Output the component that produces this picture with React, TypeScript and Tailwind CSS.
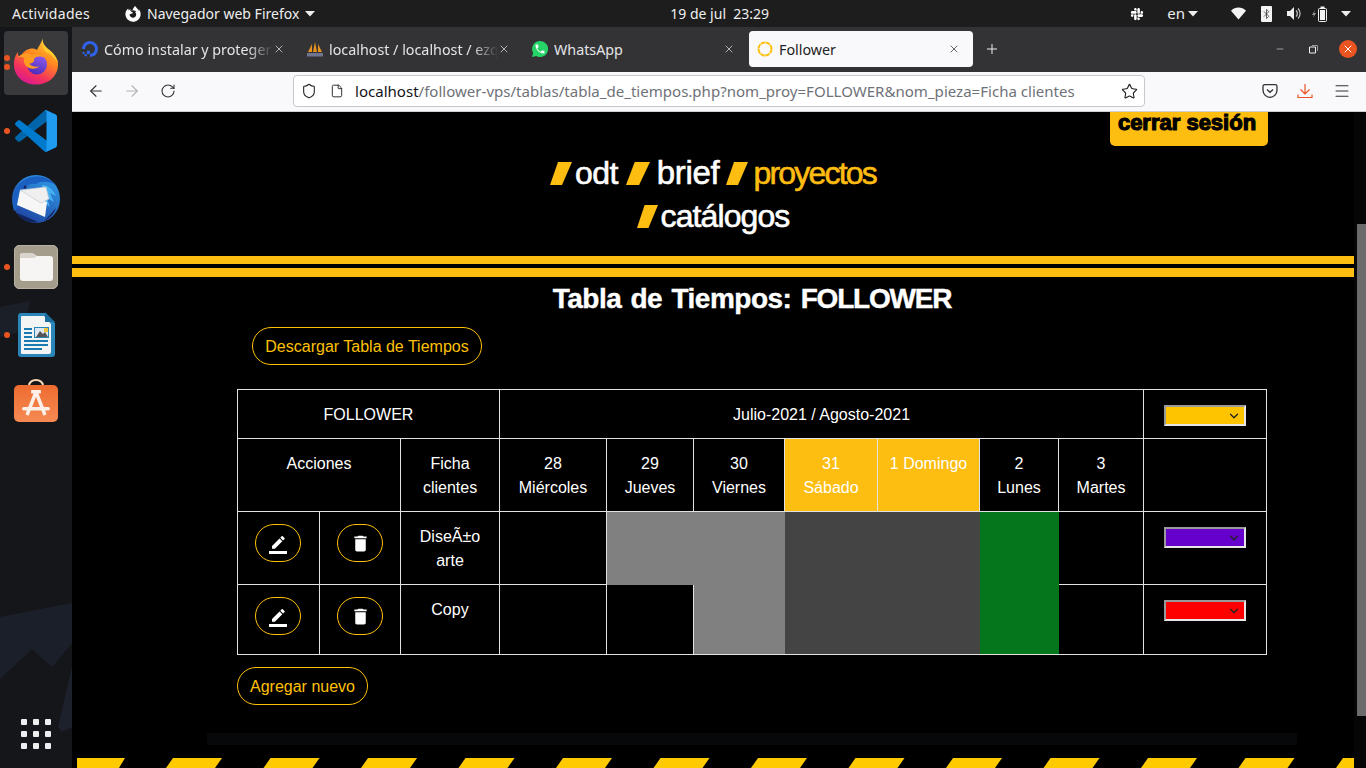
import * as React from "react";
import { ArrowLeft, ArrowRight, RotateCw, Shield, File, Star, Menu, X, Plus, Minus, Bluetooth, ChevronDown } from "lucide-react";
import { FaFirefoxBrowser, FaSlack } from "react-icons/fa";
import { SiDigitalocean } from "react-icons/si";
import { MdDelete } from "react-icons/md";

const UI_FONT = "font-['Noto_Sans',sans-serif]";

const Caret = ({ className = "" }: { className?: string }) => (
  <svg width="10" height="6" viewBox="0 0 10 6" className={className}>
    <path d="M0 0h10L5 5.5z" fill="currentColor" />
  </svg>
);

const FirefoxIcon = () => (
  <svg width="46" height="47" viewBox="0 0 48 48" className="mb-[3px]">
    <defs>
      <linearGradient id="ffBase" x1="0.8" y1="0" x2="0.3" y2="1">
        <stop offset="0" stopColor="#ffd23c" />
        <stop offset="0.4" stopColor="#ff8a1e" />
        <stop offset="0.75" stopColor="#f5345c" />
        <stop offset="1" stopColor="#d9178f" />
      </linearGradient>
      <linearGradient id="ffGlobe" x1="0.7" y1="0" x2="0.3" y2="1">
        <stop offset="0" stopColor="#8f5cf0" />
        <stop offset="1" stopColor="#4a2ab8" />
      </linearGradient>
    </defs>
    <path d="M31 0c-.5 6 3 9 7 12 6 5 9 10 9 15 0 12-10 21-23 21S1 39 1 27c0-5 1-9 4-13 0 3 1 5 3 6 1-5 5-8 9-9 3-1 6-.5 8 1 2-4 5-8 6-12z" fill="url(#ffBase)" />
    <path d="M31 0c-.5 6 3 9 7 12 5 4 8 9 9 14-3-6-8-10-13-12-3-4-4-9-3-14z" fill="#ffcb2d" />
    <circle cx="25" cy="27" r="10.500" fill="url(#ffGlobe)" />
    <path d="M5 20C9 15 15 14 20 17c4-2 10-1 13 3-5-2-9-1-11 1 1 3-2 5-5 5 2 3 7 4 11 3-5 4-12 3-15-1-2-3-2-6-1-8-3-1-5-1-7 0z" fill="#ff9b20" />
  </svg>
);

const VsCodeIcon = () => (
  <svg width="42" height="42" viewBox="0 0 100 100">
    <path fill="#0065A9" d="M96.5 10.8 75.9.9c-2.4-1.1-5.2-.6-7.1 1.2L1.4 63.6c-1.8 1.6-1.8 4.5 0 6.2l5.5 5c1.5 1.3 3.7 1.4 5.3.2L93.4 13.4c2.7-2.1 6.6-.1 6.6 3.3v-.2c0-2.4-1.4-4.6-3.5-5.7z" />
    <path fill="#007ACC" d="M96.5 89.2 75.9 99.1c-2.4 1.1-5.2.6-7.1-1.2L1.4 36.4c-1.8-1.6-1.8-4.5 0-6.2l5.5-5c1.5-1.3 3.7-1.4 5.3-.2l81.2 61.6c2.7 2.1 6.6.1 6.6-3.3v.2c0 2.4-1.4 4.6-3.5 5.7z" />
    <path fill="#1F9CF0" d="M75.9 99.1c-2.4 1.2-5.2.7-7.1-1.2C71.1 100.2 75 98.6 75 95.3V4.7c0-3.3-3.9-4.9-6.2-2.6 1.9-1.9 4.7-2.4 7.1-1.2l20.6 9.9c2.1 1 3.5 3.2 3.5 5.6v67.2c0 2.4-1.4 4.6-3.5 5.6L75.9 99.1z" />
  </svg>
);

const ThunderbirdIcon = () => (
  <svg width="48" height="48" viewBox="0 0 48 48">
    <defs>
      <linearGradient id="tbBody" x1="0.8" y1="0" x2="0.2" y2="1">
        <stop offset="0" stopColor="#2f9be8" />
        <stop offset="1" stopColor="#1e3f9e" />
      </linearGradient>
    </defs>
    <circle cx="24" cy="24" r="24" fill="url(#tbBody)" />
    <path d="M2 36C-2 24 2 10 14 4c10-5 22-3 30 6-8-4-15-4-20-1-5-1-9 1-11 4l-2 6c-2 6-2 12-9 17z" fill="#1b5fc0" />
    <path d="M30 10c6 0 11 4 14 11l-6-3 4 9-7-4 3 9-8-6z" fill="#47b0f0" />
    <path d="M8 15l27 12-2 15L5 30z" fill="#f6f6f6" />
    <path d="M8 15l26-3 3 12-8 4z" fill="#efefef" stroke="#b9c2cc" strokeWidth="0.600" />
    <path d="M14 46c-4-2-7-5-9-8l12 5 9 4c-4 1-8 0-12-1zM32 46c5-2 10-7 12-13l-7 8z" fill="#12245e" />
    <circle cx="13" cy="12" r="1.500" fill="#12245e" />
  </svg>
);

const FilesIcon = () => (
  <div className="flex h-[44px] w-[44px] items-center justify-center rounded-[5px] border border-[#b9b2a4] bg-[#a59d8c]">
    <svg width="33" height="28" viewBox="0 0 33 28">
      <path d="M0 3a3 3 0 0 1 3-3h9l5 3h13a3 3 0 0 1 3 3v19a3 3 0 0 1-3 3H3a3 3 0 0 1-3-3z" fill="#f6f5f3" />
      <path d="M0 3a3 3 0 0 1 3-3h9l5 3-3 2H0z" fill="#d8d4cb" />
    </svg>
  </div>
);

const WriterIcon = () => (
  <svg width="37" height="46" viewBox="0 0 37 46">
    <path d="M3 1h24l10 10v31a3 3 0 0 1-3 3H3a3 3 0 0 1-3-3V4a3 3 0 0 1 3-3z" fill="#2a86b8" />
    <path d="M4 4h22l7 8v28a2 2 0 0 1-2 2H4a1 1 0 0 1-1-1V5a1 1 0 0 1 1-1z" fill="#f3f5f5" />
    <path d="M27 0l10 10H27z" fill="#1a6d9c" />
    <path d="M6 16h8v2H6zM6 20h8v2H6zM6 24h8v2H6zM6 28h24v2H6zM6 32h24v2H6zM6 36h18v2H6z" fill="#1a7bb0" />
    <rect x="16" y="15" width="15" height="11" fill="#2a86b8" />
    <rect x="17" y="16" width="13" height="9" fill="#dfe8ee" />
    <path d="M18 25l4-6 3 3 2-2 3 5z" fill="#555" />
    <rect x="26" y="16" width="4" height="4" fill="#f0c33c" />
  </svg>
);

const StoreIcon = () => (
  <svg width="44" height="43" viewBox="0 0 44 43" className="mb-[5px]">
    <defs>
      <linearGradient id="storeBag" x1="0" y1="0" x2="0" y2="1">
        <stop offset="0" stopColor="#ee6c2f" />
        <stop offset="1" stopColor="#f58a54" />
      </linearGradient>
    </defs>
    <path d="M15 8V6.500a7 5.500 0 0 1 14 0V8" fill="none" stroke="#f8d8b8" strokeWidth="2" />
    <rect x="0" y="6" width="44" height="37" rx="5" fill="url(#storeBag)" />
    <path d="M22 13L13 36M22 13L31 36" fill="none" stroke="#fbefe8" strokeWidth="3.500" />
    <rect x="17" y="11" width="10" height="3.500" rx="1" fill="#fbefe8" />
    <rect x="8" y="28" width="28" height="3.500" rx="1.700" fill="#fbefe8" />
  </svg>
);

const dockApps = [
  { key: "firefox", icon: <FirefoxIcon />, active: true },
  { key: "vscode", icon: <VsCodeIcon /> },
  { key: "thunderbird", icon: <ThunderbirdIcon /> },
  { key: "files", icon: <FilesIcon /> },
  { key: "writer", icon: <WriterIcon /> },
  { key: "store", icon: <StoreIcon /> },
];

const Dock = () => (
  <aside className="relative flex w-[72px] shrink-0 flex-col items-center gap-1 overflow-hidden bg-[#15161a] pt-1">
    <svg className="absolute inset-0 h-full w-full" viewBox="0 0 72 741" preserveAspectRatio="none">
      <path d="M0 590l72-14v40l-20 24-20-18-32 30z" fill="#1f2733" opacity="0.6" />
      <path d="M58 700l14-60v60l-10 5z" fill="#1f2733" opacity="0.7" />
      <path d="M0 280l30-6-6 30-24 6z" fill="#1a1f28" />
    </svg>
    {dockApps.map((app) => (
      <div
        key={app.key}
        className={`relative flex h-16 w-16 items-center justify-center rounded-[4px] ${app.active ? "bg-[#3a3a3c]" : ""}`}
      >
        {app.icon}
      </div>
    ))}
    <span className="absolute left-[4px] top-[28px] h-[6px] w-[6px] rounded-full bg-[#e95420]" />
    <span className="absolute left-[4px] top-[37px] h-[6px] w-[6px] rounded-full bg-[#e95420]" />
    <span className="absolute left-[4px] top-[101px] h-[6px] w-[6px] rounded-full bg-[#e95420]" />
    <span className="absolute left-[4px] top-[237px] h-[6px] w-[6px] rounded-full bg-[#e95420]" />
    <span className="absolute left-[4px] top-[305px] h-[6px] w-[6px] rounded-full bg-[#e95420]" />
    <div className="relative mb-[19px] mt-auto grid grid-cols-3 gap-[6px]">
      {Array.from({ length: 9 }).map((_, i) => (
        <span key={i} className="h-[6px] w-[6px] rounded-[1px] bg-[#eeeeee]" />
      ))}
    </div>
  </aside>
);

const TopBar = () => (
  <header className={`flex h-[27px] items-center bg-[#1d1d1d] text-[14px] text-[#eeeeee] ${UI_FONT}`}>
    <span className="ml-3 w-[113px] tracking-[0.300px]">Actividades</span>
    <FaFirefoxBrowser size={16} className="text-white" />
    <span className="ml-[6px]">Navegador web Firefox</span>
    <Caret className="ml-[6px]" />
    <span className="ml-[355px]">19 de jul&nbsp;&nbsp;23:29</span>
    <div className="ml-auto flex items-center pr-[15px]">
      <FaSlack size={14} className="text-white" />
      <span className="ml-[23px] text-[15px]">en</span>
      <Caret className="ml-[3px]" />
      <svg width="15" height="13" viewBox="0 0 16 13" className="ml-[33px]">
        <path d="M0 3.500C4.500-1 11.500-1 16 3.500L8 13z" fill="#f4f4f4" />
      </svg>
      <span className="ml-[15px] flex h-[16px] w-[11px] items-center justify-center rounded-[1px] bg-[#f4f4f4]">
        <Bluetooth size={12} strokeWidth={1.5} className="text-[#222]" />
      </span>
      <svg width="15" height="13" viewBox="0 0 15 13" className="ml-[15px]">
        <path d="M0 4h3l4-4v13L3 9H0z" fill="#f0f0f0" />
        <path d="M9 3.500a4 4 0 0 1 0 6M11 1.500a7 7 0 0 1 0 10" fill="none" stroke="#c8c8c8" strokeWidth="1.200" />
      </svg>
      <svg width="16" height="16" viewBox="0 0 16 16" className="ml-[10px]">
        <path d="M3 4L0 9h2l-1 3 3-5H2z" fill="#9a9a9a" />
        <rect x="6.500" y="2.500" width="8" height="13" rx="1" fill="none" stroke="#f4f4f4" />
        <rect x="8.500" y="0.500" width="4" height="2" fill="#f4f4f4" />
        <rect x="8" y="4" width="5" height="10" fill="#f4f4f4" />
      </svg>
      <Caret className="ml-[13px]" />
    </div>
  </header>
);

const tabs = [
  { title: "Cómo instalar y proteger", icon: <SiDigitalocean size={16} className="text-[#2f62e8]" />, fade: true },
  {
    title: "localhost / localhost / ezq",
    fade: true,
    icon: (
      <svg width="16" height="15" viewBox="0 0 16 15">
        <path d="M1 10L5 2v8zM6 10L8 0l2 10zM11 10V2l4 8z" fill="#e8921e" />
        <path d="M0 11h16v3.500H0z" fill="#6f7590" />
      </svg>
    ),
  },
  {
    title: "WhatsApp",
    icon: (
      <svg width="16" height="16" viewBox="0 0 16 16">
        <path d="M8 0a8 8 0 1 1-3.800 15L0 16l1.100-4.100A8 8 0 0 1 8 0z" fill="#25d366" />
        <path
          transform="translate(2 2) scale(0.500)"
          d="M6.620 10.790c1.440 2.830 3.760 5.140 6.590 6.590l2.200-2.200c.27-.27.67-.36 1.020-.24 1.120.37 2.330.57 3.570.57.55 0 1 .45 1 1V20c0 .55-.45 1-1 1-9.390 0-17-7.610-17-17 0-.55.45-1 1-1h3.500c.55 0 1 .45 1 1 0 1.250.2 2.450.57 3.570.11.35.03.74-.25 1.020l-2.200 2.200z"
          fill="white"
        />
      </svg>
    ),
  },
  {
    title: "Follower",
    active: true,
    icon: (
      <svg width="16" height="16" viewBox="0 0 16 16">
        <circle cx="8" cy="8" r="6.500" fill="none" stroke="#fdc010" strokeWidth="2" strokeDasharray="4.500 0.600" />
      </svg>
    ),
  },
];

const TabBar = () => (
  <div className={`flex h-[45px] items-center gap-[1px] bg-[#333336] pb-[1px] pl-[2px] text-[14.300px] ${UI_FONT}`}>
    {tabs.map((tab) => (
      <div
        key={tab.title}
        className={`flex h-[36px] w-[224px] shrink-0 items-center rounded-[4px] pl-2 pr-[13px] ${
          tab.active ? "bg-[#f9f9fb] text-[#222]" : "text-[#e4e4e6]"
        }`}
      >
        <span className="flex w-4 shrink-0 justify-center">{tab.icon}</span>
        <span
          className={`ml-[6px] min-w-0 flex-1 overflow-hidden whitespace-nowrap pt-[2px] ${
            tab.fade ? "[mask-image:linear-gradient(to_right,black_85%,transparent_100%)]" : ""
          }`}
        >
          {tab.title}
        </span>
        <X size={12} strokeWidth={1.5} className={`shrink-0 ${tab.active ? "text-[#333]" : "text-[#ddd]"}`} />
      </div>
    ))}
    <Plus size={16} strokeWidth={1.5} className="ml-[10px] text-[#eee]" />
    <div className="ml-auto flex items-center pr-[9px]">
      <Minus size={10} strokeWidth={1.5} className="text-[#ddd]" />
      <svg width="10" height="10" viewBox="0 0 10 10" className="ml-[24px]">
        <path d="M.5 3h6v6h-6z" fill="none" stroke="#eee" />
        <path d="M3 1.500h5.500V7" fill="none" stroke="#999" />
      </svg>
      <span className="ml-[20px] flex h-[18px] w-[18px] items-center justify-center rounded-full bg-[#e95420]">
        <X size={12} strokeWidth={2} className="text-white" />
      </span>
    </div>
  </div>
);

const UrlBar = () => (
  <div className="flex h-[32px] w-[852px] items-center rounded-[4px] border border-[#c8c8ca] bg-white">
    <Shield size={16} strokeWidth={1.6} className="ml-[7px] text-[#222]" />
    <File size={14} strokeWidth={1.6} className="ml-[13px] text-[#222]" />
    <span className={`ml-[11px] whitespace-nowrap text-[15.060px] ${UI_FONT}`}>
      <span className="text-[#15141a]">localhost</span>
      <span className="text-[#6f7278]">/follower-vps/tablas/tabla_de_tiempos.php?nom_proy=FOLLOWER&amp;nom_pieza=Ficha clientes</span>
    </span>
    <Star size={17} strokeWidth={1.6} className="ml-auto mr-[6px] text-[#222]" />
  </div>
);

const NavBar = () => (
  <div className="flex h-[40px] items-center border-b border-[#cfcfd2] bg-[#f9f9fb] pb-[1px] text-[#333]">
    <ArrowLeft size={18} strokeWidth={1.5} className="ml-[15px]" />
    <ArrowRight size={18} strokeWidth={1.5} className="ml-[18px] text-[#b4b4b6]" />
    <RotateCw size={16} strokeWidth={1.6} className="ml-[19px]" />
    <div className="ml-[117px]">
      <UrlBar />
    </div>
    <svg width="16" height="14" viewBox="0 0 16 14" className="ml-[117px]" fill="none" stroke="#333" strokeWidth="1.300">
      <path d="M1 2.500C1 1.500 1.700.7 2.700.7h10.600c1 0 1.700.8 1.700 1.800V6c0 4-3 7.300-7 7.300S1 10 1 6z" />
      <path d="M5 5.500l3 2.800 3-2.800" />
    </svg>
    <svg width="16" height="15" viewBox="0 0 16 15" className="ml-[19px]" fill="none" stroke="#e95420" strokeWidth="1.200">
      <path d="M8 0v10M3.500 5.500L8 10l4.500-4.500M1 10.500v3h14v-3" />
    </svg>
    <Menu size={18} strokeWidth={1.4} className="ml-[20px]" />
  </div>
);

const Slash = ({ width = 22 }: { width?: number }) => (
  <svg width={width} height="23" viewBox="0 0 22 23" preserveAspectRatio="none" className="shrink-0">
    <path d="M8 0h14L12 23H0z" fill="#febd11" />
  </svg>
);

const NavLink = ({ children, className }: { children: React.ReactNode; className: string }) => (
  <span className={`font-['Liberation_Sans',sans-serif] leading-[40px] [-webkit-text-stroke:0.600px_currentColor] ${className}`}>
    {children}
  </span>
);

const PILL =
  "flex h-[38px] items-center justify-center rounded-[19px] border border-[#ffc107] text-[16px] text-[#ffc107]";

const EditIcon = () => (
  <svg width="18" height="18" viewBox="0 0 24 24" fill="white">
    <path d="M17.750 7 14 3.250l-10 10V17h3.750l10-10zm2.960-2.960c.39-.39.39-1.020 0-1.410L18.370.29c-.39-.39-1.020-.39-1.410 0L15 2.250 18.750 6l1.960-1.960z" />
    <path d="M0 20h24v4H0z" />
  </svg>
);

const ColorSelect = ({ color }: { color: string }) => (
  <div className="relative h-[21px] w-[82px]">
    <select
      className="block h-[21px] w-[82px] appearance-none border-2 border-t-[#9a9a9a] border-l-[#9a9a9a] border-r-[#e6e6e6] border-b-[#e6e6e6] text-black"
      style={{ backgroundColor: color }}
    >
      <option value=""></option>
    </select>
    <ChevronDown size={14} strokeWidth={2.2} className="pointer-events-none absolute right-[5px] top-[4px] text-[#222]" />
  </div>
);

const CELL = "border-r border-b border-[#e2e2e2] text-center align-top pt-[13px]";
const MID_CELL = "border-r border-b border-[#e2e2e2] text-center align-middle pt-[2px]";
const SELECT_CELL = "border-r border-b border-[#e2e2e2] align-top pt-[15px] pl-5";
const PIPE_CELL = "border-r border-b border-[#e2e2e2] align-top pt-3";
const days = [
  { n: "28", d: "Miércoles" },
  { n: "29", d: "Jueves" },
  { n: "30", d: "Viernes" },
  { n: "31", d: "Sábado", hl: true },
  { n: "1 Domingo", d: "", hl: true },
  { n: "2", d: "Lunes" },
  { n: "3", d: "Martes" },
];

const ActionCells = () => (
  <>
    <td className={PIPE_CELL}>
      <div className="flex justify-center pr-[1px]">
        <button className={`${PILL} w-[46px] pt-1`}>
          <EditIcon />
        </button>
      </div>
    </td>
    <td className={PIPE_CELL}>
      <div className="flex justify-center">
        <button className={`${PILL} w-[46px]`}>
          <MdDelete size={21} className="text-white" />
        </button>
      </div>
    </td>
  </>
);

const TimeTable = () => (
  <table className="table-fixed w-[1030px] border-separate border-spacing-0 border-l border-t border-[#e2e2e2] text-[16px] leading-[24px] text-white">
    <colgroup>
      {[82, 81, 99, 107, 87, 91, 93, 102, 79, 85, 123].map((w, i) => (
        <col key={i} style={{ width: w }} />
      ))}
    </colgroup>
    <tbody>
      <tr className="h-[49px]">
        <td colSpan={3} className={MID_CELL}>FOLLOWER</td>
        <td colSpan={7} className={MID_CELL}>Julio-2021 / Agosto-2021</td>
        <td className={SELECT_CELL}>
          <ColorSelect color="#ffc400" />
        </td>
      </tr>
      <tr className="h-[73px]">
        <td colSpan={2} className={CELL}>Acciones</td>
        <td className={CELL}>Ficha<br />clientes</td>
        {days.map((day) => (
          <td key={day.n} className={`${CELL} ${day.hl ? "bg-[#febd11]" : ""}`}>
            {day.n}
            {day.d && <br />}
            {day.d}
          </td>
        ))}
        <td className={CELL}></td>
      </tr>
      <tr className="h-[73px]">
        <ActionCells />
        <td className={CELL}>DiseÃ±o<br />arte</td>
        <td className={CELL}></td>
        <td className="bg-[#808080]"></td>
        <td className="bg-[#808080]"></td>
        <td className="bg-[#444444]"></td>
        <td className="bg-[#444444]"></td>
        <td className="bg-[#06761c]"></td>
        <td className={CELL}></td>
        <td className={SELECT_CELL}>
          <ColorSelect color="#6600cc" />
        </td>
      </tr>
      <tr className="h-[70px]">
        <ActionCells />
        <td className={CELL}>Copy</td>
        <td className={CELL}></td>
        <td className={CELL}></td>
        <td className="border-b border-[#e2e2e2] bg-[#808080]"></td>
        <td className="border-b border-[#e2e2e2] bg-[#444444]"></td>
        <td className="border-b border-[#e2e2e2] bg-[#444444]"></td>
        <td className="border-b border-[#e2e2e2] bg-[#06761c]"></td>
        <td className={CELL}></td>
        <td className={SELECT_CELL}>
          <ColorSelect color="#ff0000" />
        </td>
      </tr>
    </tbody>
  </table>
);

const HazardStripes = () => (
  <svg width="1277" height="10" viewBox="0 0 1277 10" className="ml-[5px] mt-[13px] block shrink-0">
    <path d="M0 0h48l-6 10H0z" fill="#ffcb00" />
    {Array.from({ length: 13 }).map((_, i) => {
      const x = 96 + i * 97.500;
      return <path key={i} d={`M${x} 0h49l-7 10h-49z`} fill="#ffcb00" />;
    })}
  </svg>
);

const Page = () => (
  <div className="flex min-w-0 flex-1 flex-col overflow-hidden bg-black font-['Liberation_Sans',sans-serif]">
    <div className="flex justify-end pr-[86px]">
      <a className="flex h-[34px] w-[158px] justify-center rounded-b-[5px] bg-[#febd11] pr-[4px] text-[22px] font-bold leading-[22px] text-black [-webkit-text-stroke:1.200px_black]">
        cerrar sesión
      </a>
    </div>
    <nav className="mt-[5px] flex flex-col items-center">
      <div className="flex h-[44px] items-center">
        <Slash />
        <span className="ml-[3px]"><NavLink className="text-[32px] tracking-[-0.600px] text-white">odt</NavLink></span>
        <span className="ml-[8px]"><Slash width={24} /></span>
        <span className="ml-[7px]"><NavLink className="text-[33px] tracking-[-0.300px] text-white">brief</NavLink></span>
        <span className="ml-[7px]"><Slash /></span>
        <span className="ml-[5px]"><NavLink className="text-[32px] tracking-[-1.800px] text-[#febd11]">proyectos</NavLink></span>
      </div>
      <div className="flex h-[42px] items-center">
        <Slash width={21} />
        <span className="ml-[3px]"><NavLink className="text-[32px] tracking-[-0.900px] text-white">catálogos</NavLink></span>
      </div>
    </nav>
    <div className="mt-[19px] h-[8px] bg-[#febd11]" />
    <div className="mt-[4px] h-[9px] bg-[#febd11]" />
    <div className="ml-[165px] w-[1030px]">
      <h1 className="mt-[2px] text-center text-[28px] font-bold leading-[40px] tracking-[-0.500px] text-white [word-spacing:2px] [-webkit-text-stroke:0.400px_white]">
        Tabla de Tiempos: <span className="tracking-[-1.200px]">FOLLOWER</span>
      </h1>
      <button className={`${PILL} ml-[15px] mt-2 w-[230px] pt-[2px]`}>Descargar Tabla de Tiempos</button>
      <div className="mt-6">
        <TimeTable />
      </div>
      <button className={`${PILL} mt-3 w-[131px] pt-[2px]`}>Agregar nuevo</button>
    </div>
    <div className="ml-[135px] mt-[28px] h-[12px] w-[1090px] shrink-0 bg-[#070809]" />
    <HazardStripes />
  </div>
);

export default function App() {
  return (
    <div className="flex h-[768px] w-[1366px] flex-col overflow-hidden bg-black">
      <TopBar />
      <div className="flex min-h-0 flex-1">
        <Dock />
        <div className="flex min-w-0 flex-1 flex-col">
          <TabBar />
          <NavBar />
          <div className="flex min-h-0 flex-1">
            <Page />
            <div className="w-3 shrink-0 bg-[#060606] pt-[112px]">
              <div className="ml-[3px] h-[492px] w-[9px] bg-[#6b6b6b]" />
            </div>
          </div>
        </div>
      </div>
    </div>
  );
}
